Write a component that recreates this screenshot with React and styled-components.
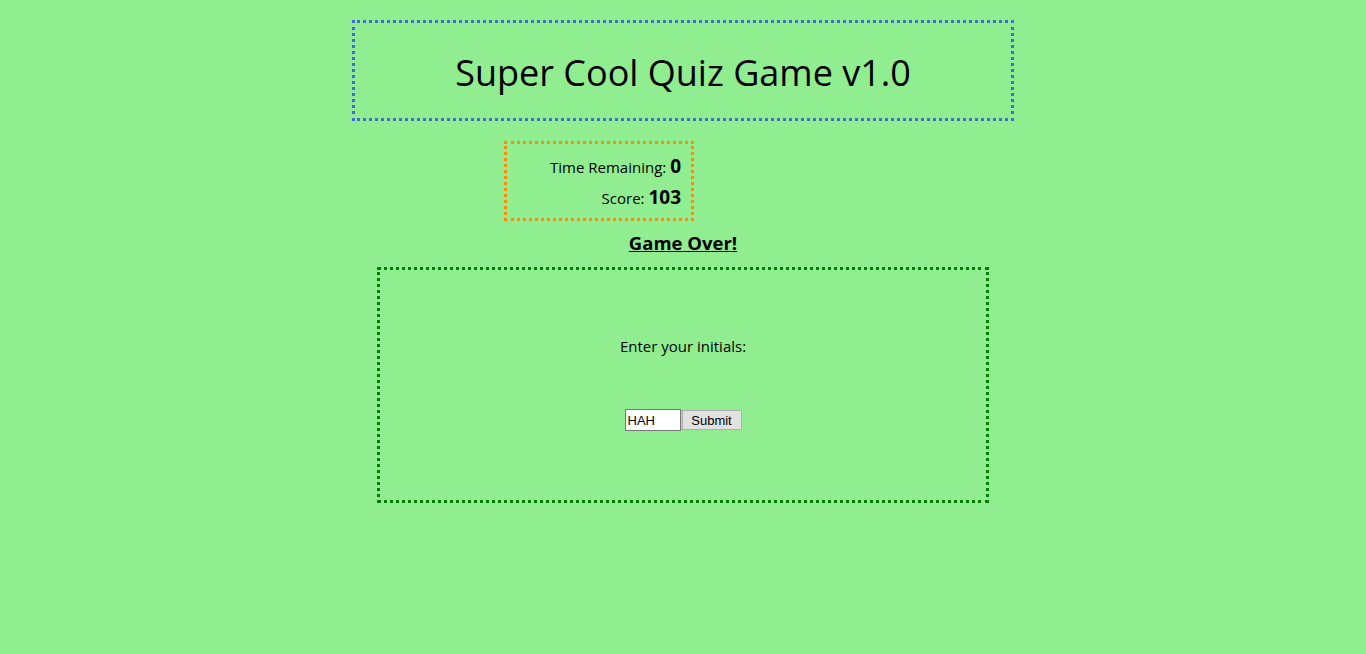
import React, { useState } from 'react';
import styled, { createGlobalStyle } from 'styled-components';

const GlobalStyle = createGlobalStyle`
  body {
    margin: 8px;
    background: #90ee90;
    font-family: "Open Sans", "Noto Sans", sans-serif;
    color: #000;
  }
`;

const Page = styled.div`
  display: flex;
  flex-direction: column;
  align-items: center;
`;

const Header = styled.header`
  box-sizing: border-box;
  width: 662px;
  height: 101px;
  margin-top: 12px;
  padding-top: 3px;
  border: 3px dotted #4169e1;
  display: flex;
  align-items: center;
  justify-content: center;
`;

const Title = styled.h1`
  margin: 0;
  font-size: 36px;
  font-weight: 400;
`;

const StatsRow = styled.div`
  width: 100%;
  display: flex;
  padding-left: 496px;
  box-sizing: border-box;
  margin-top: 20px;
`;

const Stats = styled.div`
  box-sizing: border-box;
  width: 190px;
  height: 80px;
  border: 3px dotted #ff8c00;
  padding: 8px 10px 0 0;
  display: flex;
  flex-direction: column;
  align-items: flex-end;
  gap: 2px;
`;

const StatLine = styled.div`
  font-size: 15px;
  line-height: 28px;
`;

const StatValue = styled.span`
  font-size: 19px;
  font-weight: 700;
`;

const GameOver = styled.h3`
  margin: 10px 0 12px;
  font-size: 18.5px;
  font-weight: 700;
  text-decoration: underline;
  line-height: 24px;
`;

const Panel = styled.section`
  box-sizing: border-box;
  width: 612px;
  height: 236px;
  border: 3px dotted #008000;
  display: flex;
  flex-direction: column;
  align-items: center;
  padding-top: 64px;
`;

const Prompt = styled.p`
  margin: 0;
  font-size: 15px;
  line-height: 24px;
`;

const Form = styled.form`
  margin-top: 51px;
  display: flex;
  align-items: center;
  gap: 1px;
`;

const Input = styled.input`
  box-sizing: border-box;
  width: 56px;
  height: 22px;
  padding: 1px 2px;
  border: 1px solid #767676;
  background: #fff;
  font-family: "Liberation Sans", Arial, sans-serif;
  font-size: 13px;
`;

const Button = styled.button`
  box-sizing: border-box;
  width: 60px;
  height: 20px;
  padding: 0;
  border: 1px solid #adadad;
  background: #e1e1e1;
  font-family: "Liberation Sans", Arial, sans-serif;
  font-size: 13px;
  color: #000;
`;

export default function App() {
  const [initials, setInitials] = useState('HAH');

  return (
    <Page>
      <GlobalStyle />
      <Header>
        <Title>Super Cool Quiz Game v1.0</Title>
      </Header>
      <StatsRow>
        <Stats>
          <StatLine>Time Remaining: <StatValue>0</StatValue></StatLine>
          <StatLine>Score: <StatValue>103</StatValue></StatLine>
        </Stats>
      </StatsRow>
      <GameOver>Game Over!</GameOver>
      <Panel>
        <Prompt>Enter your initials:</Prompt>
        <Form onSubmit={e => e.preventDefault()}>
          <Input value={initials} onChange={e => setInitials(e.target.value)} />
          <Button type="submit">Submit</Button>
        </Form>
      </Panel>
    </Page>
  );
}
